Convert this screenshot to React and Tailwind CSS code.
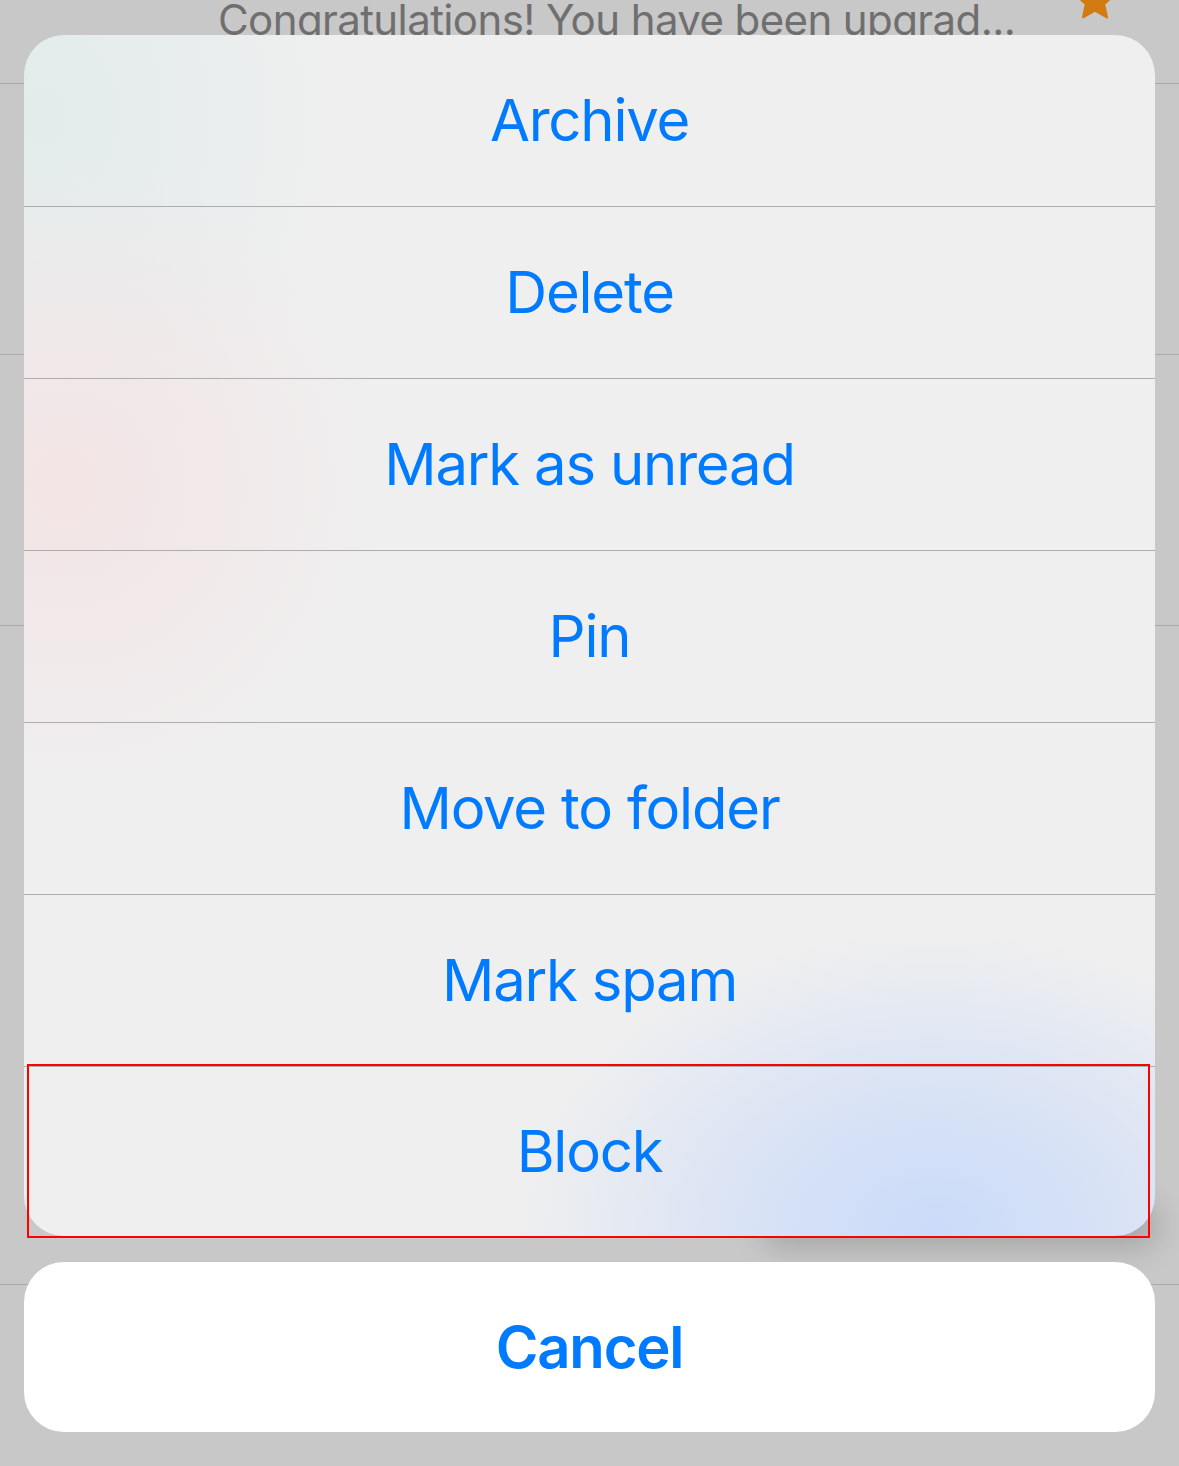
import React from 'react';

const actions = ['Archive', 'Delete', 'Mark as unread', 'Pin', 'Move to folder', 'Mark spam', 'Block'];

const Star = () => (
  <svg viewBox="0 0 24 24" className="w-[46px] h-[46px]" fill="#d27b12">
    <path d="M12 1.8l2.9 6.4 7 .7-5.2 4.7 1.5 6.9L12 17l-6.2 3.5 1.5-6.9L2.1 8.9l7-.7z" strokeLinejoin="round" stroke="#d27b12" strokeWidth="1.2" />
  </svg>
);

export default function App() {
  return (
    <div className="relative w-[1179px] h-[1466px] bg-[#c8c8c8] overflow-hidden font-['Inter',sans-serif]">
      {/* list behind the dim */}
      <div className="flex flex-col">
        <div className="h-[84px] border-b border-[#a9a9a9] relative">
          <div className="absolute left-[218px] top-[-12px] text-[42px] text-[#6f6f6f] tracking-[-0.6px] whitespace-nowrap">
            Congratulations! You have been upgrad...
          </div>
          <div className="absolute left-[1072px] top-[-22px]">
            <Star />
          </div>
        </div>
        <div className="h-[271px] border-b border-[#a9a9a9]" />
        <div className="h-[271px] border-b border-[#a9a9a9]" />
        <div className="h-[659px] border-b border-[#a9a9a9]" />
      </div>

      {/* soft shadow under the pressed row */}
      <div className="absolute left-[760px] top-[1200px] w-[400px] h-[50px] rounded-full bg-black/15 blur-[14px]" />

      {/* action sheet */}
      <div className="absolute inset-0 px-[24px] pt-[35px] flex flex-col">
        <div className="relative rounded-[40px] overflow-hidden bg-[#efefef] bg-[radial-gradient(ellipse_420px_300px_at_910px_1195px,#cadbf9_0%,rgba(210,223,247,0.9)_35%,rgba(239,239,239,0)_100%),radial-gradient(ellipse_320px_320px_at_40px_450px,rgba(243,228,229,1)_0%,rgba(239,239,239,0)_100%),radial-gradient(ellipse_300px_360px_at_20px_80px,rgba(226,236,235,1)_0%,rgba(239,239,239,0)_100%)]">
          {actions.map((a, i) => (
            <div
              key={a}
              className={`flex items-center justify-center text-[58px] tracking-[-1.2px] text-[#007aff] ${i === 0 ? 'h-[171px]' : i === actions.length - 1 ? 'h-[170px] border-t border-[#adadad]' : 'h-[172px] border-t border-[#adadad]'}`}
            >
              {a}
            </div>
          ))}
        </div>
        <div className="mt-[26px] h-[170px] rounded-[40px] bg-white flex items-center justify-center text-[58px] tracking-[-1.2px] font-semibold text-[#007aff]">
          Cancel
        </div>
      </div>

      {/* highlight frame */}
      <div className="absolute left-[27px] top-[1064px] w-[1123px] h-[174px] border-2 border-[#ff0000]" />
    </div>
  );
}
